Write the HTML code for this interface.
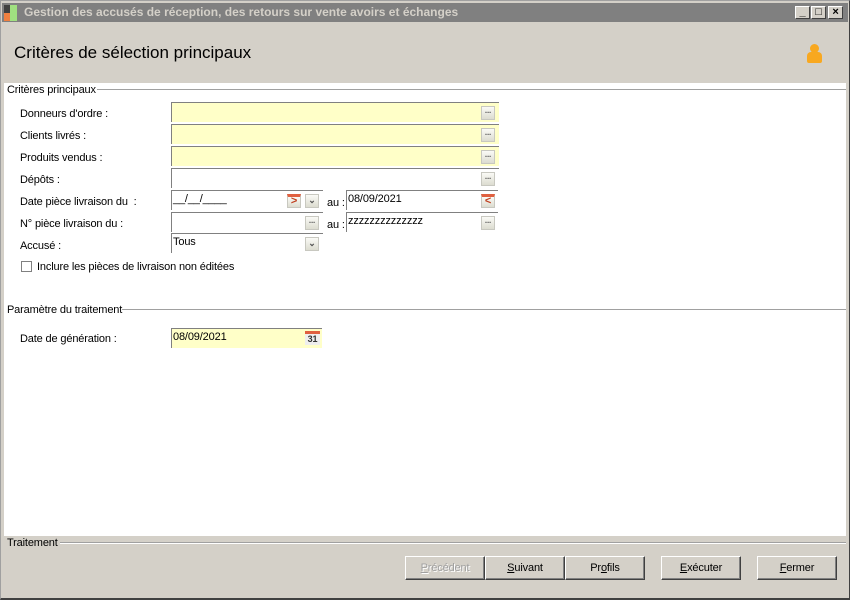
<!DOCTYPE html>
<html><head><meta charset="utf-8"><style>
*{margin:0;padding:0;box-sizing:border-box}
body{width:850px;height:600px;overflow:hidden;background:#d4d0c8;font-family:"Liberation Sans",Tahoma,sans-serif;font-size:11px;color:#000;position:relative;letter-spacing:-0.15px}
.a{position:absolute}
.win{left:0;top:0;width:850px;height:600px;border:1px solid #a0a0a0;border-right-color:#404040;border-bottom-color:#404040;border-bottom-width:2px}
.title{left:2px;top:3px;width:846px;height:19px;background:#808080;color:#d4d0c8;font-weight:bold;font-size:12px;line-height:19px;padding-left:22px;letter-spacing:0}
.wb{top:6px;width:15px;height:13px;background:#d4d0c8;border:1px solid;border-color:#fff #404040 #404040 #fff;font-size:11px;line-height:11px;text-align:center;font-weight:bold}
.panel{left:4px;top:83px;width:842px;height:453px;background:#fff}
.lbl{left:20px}
.f{border-top:1px solid #808080;border-left:1px solid #808080;background:#ffffc8;height:20px;padding-left:1px;line-height:17px}
.w{background:#fff}
.btn{width:14px;height:14px;border:1px solid #c8c8c0;background:linear-gradient(#fafaf6,#dcdcd0);font-size:8px;line-height:7px;text-align:center;color:#555;font-weight:bold}
.grp{height:2px;border-top:1px solid #a0a0a0;border-bottom:1px solid #fff}
.pb{top:556px;width:80px;height:24px;border:1px solid;border-color:#fff #404040 #404040 #fff;box-shadow:inset -1px -1px 0 #808080;text-align:center;line-height:22px;font-size:11px}
</style></head><body>
<div class="a win"></div>
<div class="a title">Gestion des accusés de réception, des retours sur vente avoirs et échanges</div>
<div class="a" style="left:4px;top:5px;width:6px;height:16px;background:#404040"></div>
<div class="a" style="left:4px;top:13px;width:6px;height:8px;background:#f08040"></div>
<div class="a" style="left:10px;top:5px;width:7px;height:16px;background:#a0e080"></div>
<div class="a wb" style="left:795px">_</div>
<div class="a wb" style="left:811px">□</div>
<div class="a wb" style="left:828px">×</div>
<div class="a" style="left:14px;top:43px;font-size:17px;letter-spacing:0">Critères de sélection principaux</div>
<div class="a" style="left:810px;top:44px;width:9px;height:9px;border-radius:50%;background:#f8a820"></div>
<div class="a" style="left:807px;top:52px;width:15px;height:11px;border-radius:4px 4px 2px 2px;background:#f8a820"></div>
<div class="a panel"></div>
<div class="a" style="left:7px;top:84px">Critères principaux</div>
<div class="a grp" style="left:97px;top:89px;width:749px"></div>

<div class="a lbl" style="top:108px">Donneurs d'ordre :</div>
<div class="a f" style="left:171px;top:102px;width:328px"></div>
<div class="a btn" style="left:481px;top:106px">...</div>
<div class="a lbl" style="top:130px">Clients livrés :</div>
<div class="a f" style="left:171px;top:124px;width:328px"></div>
<div class="a btn" style="left:481px;top:128px">...</div>
<div class="a lbl" style="top:152px">Produits vendus :</div>
<div class="a f" style="left:171px;top:146px;width:328px"></div>
<div class="a btn" style="left:481px;top:150px">...</div>
<div class="a lbl" style="top:174px">Dépôts :</div>
<div class="a f w" style="left:171px;top:168px;width:328px"></div>
<div class="a btn" style="left:481px;top:172px">...</div>

<div class="a lbl" style="top:196px">Date pièce livraison du&nbsp; :</div>
<div class="a f w" style="left:171px;top:190px;width:152px">__/__/____</div>
<div class="a btn" style="left:287px;top:194px;border-top:3px solid #e06040;color:#c04020;font-size:11px;line-height:9px">&gt;</div>
<div class="a btn" style="left:305px;top:194px;font-size:9px;line-height:11px">&#8964;</div>
<div class="a" style="left:327px;top:197px">au :</div>
<div class="a f w" style="left:346px;top:190px;width:152px">08/09/2021</div>
<div class="a btn" style="left:481px;top:194px;border-top:3px solid #e06040;color:#c04020;font-size:11px;line-height:9px">&lt;</div>

<div class="a lbl" style="top:218px">N° pièce livraison du :</div>
<div class="a f w" style="left:171px;top:212px;width:152px"></div>
<div class="a btn" style="left:305px;top:216px">...</div>
<div class="a" style="left:327px;top:219px">au :</div>
<div class="a f w" style="left:346px;top:212px;width:152px">zzzzzzzzzzzzzz</div>
<div class="a btn" style="left:481px;top:216px">...</div>

<div class="a lbl" style="top:240px">Accusé :</div>
<div class="a f w" style="left:171px;top:233px;width:152px">Tous</div>
<div class="a btn" style="left:305px;top:237px;font-size:9px;line-height:11px">&#8964;</div>

<div class="a" style="left:21px;top:261px;width:11px;height:11px;border:1px solid #808080;background:#fff"></div>
<div class="a" style="left:37px;top:261px">Inclure les pièces de livraison non éditées</div>

<div class="a" style="left:7px;top:304px">Paramètre du traitement</div>
<div class="a grp" style="left:122px;top:309px;width:724px"></div>
<div class="a lbl" style="top:333px">Date de génération :</div>
<div class="a f" style="left:171px;top:328px;width:151px">08/09/2021</div>
<div class="a" style="left:305px;top:331px;width:15px;height:14px;background:#eee;border-top:3px solid #e06040;font-size:9px;font-weight:bold;color:#333;text-align:center;line-height:11px">31</div>

<div class="a" style="left:7px;top:537px">Traitement</div>
<div class="a grp" style="left:60px;top:542px;width:786px"></div>
<div class="a pb" style="left:405px;color:#a0a0a0;text-shadow:1px 1px 0 #fff"><u>P</u>récédent</div>
<div class="a pb" style="left:485px"><u>S</u>uivant</div>
<div class="a pb" style="left:565px">Pr<u>o</u>fils</div>
<div class="a pb" style="left:661px"><u>E</u>xécuter</div>
<div class="a pb" style="left:757px"><u>F</u>ermer</div>
</body></html>
